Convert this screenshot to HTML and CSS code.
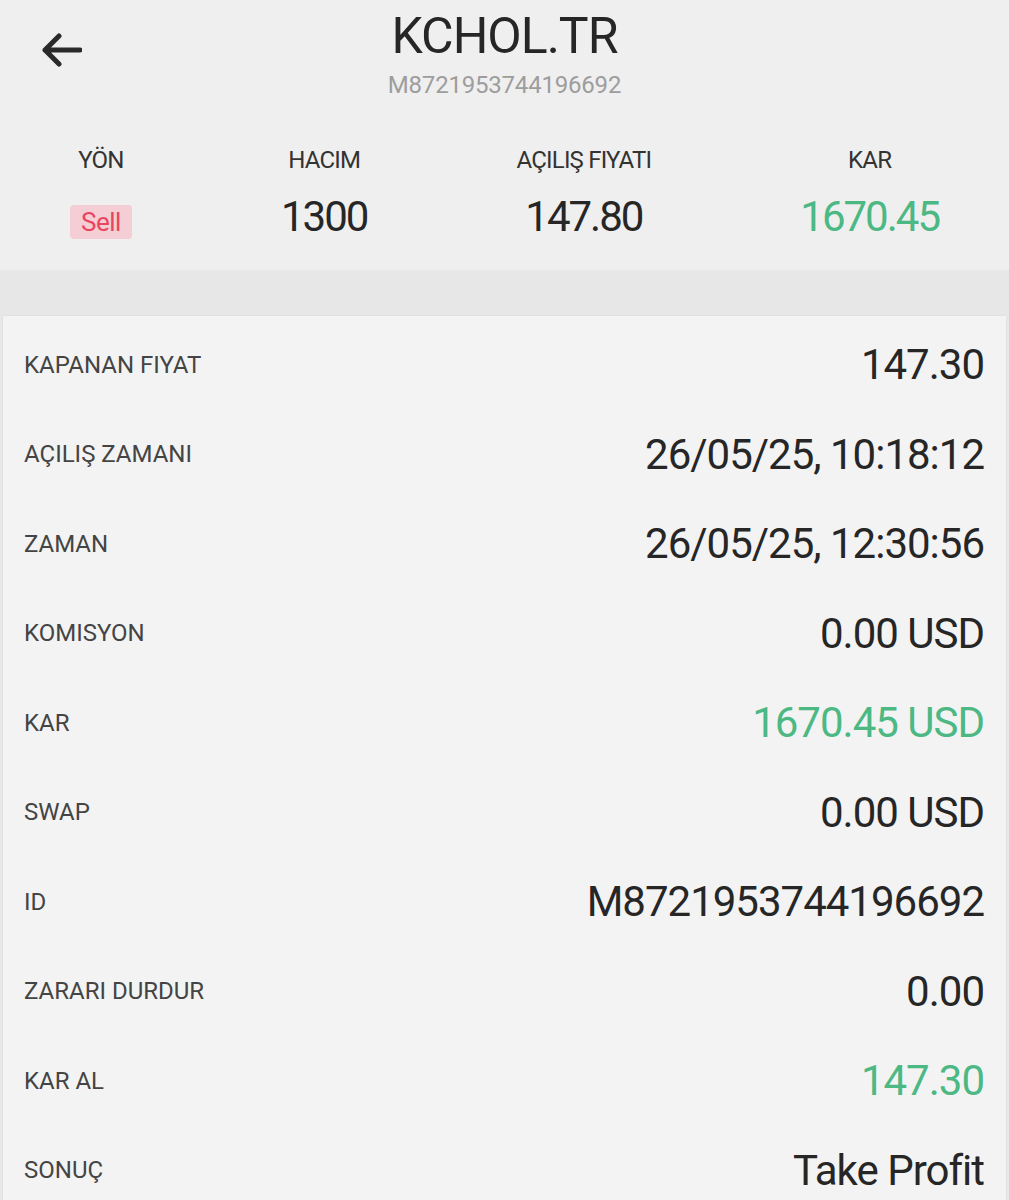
FILE: index.html
```html
<!DOCTYPE html>
<html lang="tr">
<head>
    <meta charset="UTF-8">
    <meta name="viewport" content="width=device-width, initial-scale=1.0">
    <title>KCHOL.TR</title>
    <link rel="stylesheet" href="styles.css">
</head>
<body>
    <header class="top-bar">
        <div class="back">
            <svg class="back-icon" width="42" height="34" viewBox="0 0 42 34">
                <path d="M40 17 H5 M19 3 L5 17 L19 31" fill="none" stroke="#2a2a2a" stroke-width="5" stroke-linecap="round" stroke-linejoin="round"/>
            </svg>
        </div>
        <div class="title-block">
            <h1 class="symbol">KCHOL.TR</h1>
            <div class="order-id">M8721953744196692</div>
        </div>
        <div></div>
    </header>

    <section class="stats">
        <div class="stat">
            <div class="stat-label">YÖN</div>
            <div class="stat-value"><span class="badge-sell">Sell</span></div>
        </div>
        <div class="stat">
            <div class="stat-label">HACIM</div>
            <div class="stat-value">1300</div>
        </div>
        <div class="stat">
            <div class="stat-label">AÇILIŞ FIYATI</div>
            <div class="stat-value">147.80</div>
        </div>
        <div class="stat">
            <div class="stat-label">KAR</div>
            <div class="stat-value positive">1670.45</div>
        </div>
    </section>

    <div class="band"></div>

    <main class="details">
        <div class="row"><span class="row-label">KAPANAN FIYAT</span><span class="row-value">147.30</span></div>
        <div class="row"><span class="row-label">AÇILIŞ ZAMANI</span><span class="row-value">26/05/25, 10:18:12</span></div>
        <div class="row"><span class="row-label">ZAMAN</span><span class="row-value">26/05/25, 12:30:56</span></div>
        <div class="row"><span class="row-label">KOMISYON</span><span class="row-value">0.00 USD</span></div>
        <div class="row"><span class="row-label">KAR</span><span class="row-value positive">1670.45 USD</span></div>
        <div class="row"><span class="row-label">SWAP</span><span class="row-value">0.00 USD</span></div>
        <div class="row"><span class="row-label">ID</span><span class="row-value">M8721953744196692</span></div>
        <div class="row"><span class="row-label">ZARARI DURDUR</span><span class="row-value">0.00</span></div>
        <div class="row"><span class="row-label">KAR AL</span><span class="row-value positive">147.30</span></div>
        <div class="row"><span class="row-label">SONUÇ</span><span class="row-value">Take Profit</span></div>
    </main>
</body>
</html>
```

FILE: styles.css
```css
body {
    margin: 0;
    padding: 0;
    background: #e8e8e8;
    font-family: Roboto, "Noto Sans", "DejaVu Sans", sans-serif;
    color: #222;
}
.top-bar {
    display: grid;
    grid-template-columns: 1fr auto 1fr;
    background: #efefef;
}
.back {
    padding: 33px 0 0 40px;
}
.back-icon {
    display: block;
}
.title-block {
    padding-top: 7px;
    text-align: center;
}
.symbol {
    margin: 0;
    font-size: 50px;
    font-weight: 400;
    line-height: 58px;
    letter-spacing: -1px;
    color: #262626;
}
.order-id {
    margin-top: 5px;
    font-size: 24px;
    line-height: 30px;
    letter-spacing: -0.2px;
    color: #9d9d9d;
}
.stats {
    display: flex;
    justify-content: space-between;
    padding: 45px 70px 28px 70px;
    background: #efefef;
}
.stat {
    display: flex;
    flex-direction: column;
    align-items: center;
}
.stat-label {
    font-size: 24px;
    line-height: 30px;
    letter-spacing: -0.8px;
    color: #333;
}
.stat-value {
    margin-top: 17px;
    height: 50px;
    font-size: 42px;
    line-height: 50px;
    letter-spacing: -2px;
    color: #262626;
}
.badge-sell {
    display: inline-block;
    margin-top: 13px;
    padding: 0 11px;
    height: 34px;
    line-height: 34px;
    border-radius: 4px;
    background: #f5cdd4;
    color: #e8465f;
    font-size: 26px;
    letter-spacing: -0.5px;
    vertical-align: top;
}
.band {
    height: 46px;
    background: #e7e7e7;
}
.details {
    margin: 0 3px;
    padding-top: 4px;
    background: #f3f3f3;
    box-shadow: 0 0 2px rgba(0, 0, 0, 0.08);
}
.row {
    display: flex;
    justify-content: space-between;
    align-items: center;
    height: 89.5px;
    padding: 0 22px 0 21px;
}
.row-label {
    font-size: 24px;
    letter-spacing: 0;
    color: #444;
}
.row-value {
    font-size: 42px;
    letter-spacing: -1px;
    color: #262626;
}
.stat-value.positive,
.row-value.positive {
    color: #4cb883;
}
```
